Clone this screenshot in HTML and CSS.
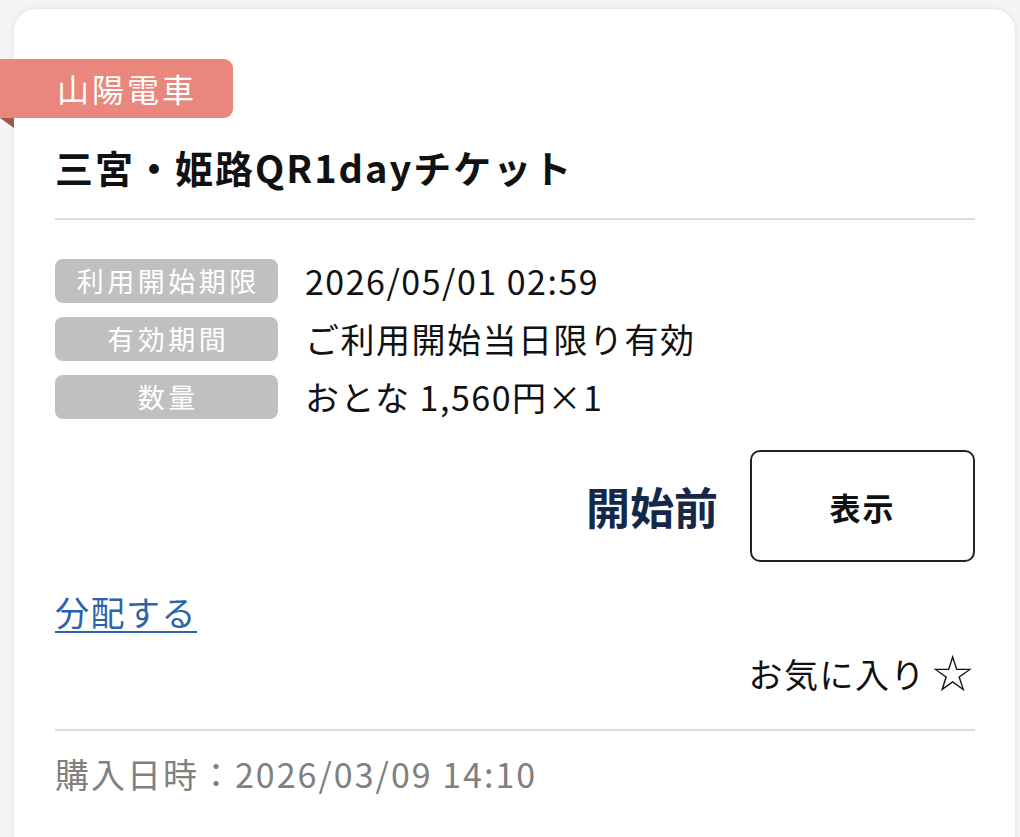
FILE: index.html
```html
<!DOCTYPE html>
<html lang="ja">
<head>
<meta charset="utf-8">
<link rel="stylesheet" href="styles.css">
</head>
<body>
<div class="card">
  <div class="ribbon">山陽電車</div>
  <h1 class="title">三宮・姫路QR1dayチケット</h1>
  <hr class="divider">
  <div class="info">
    <div class="label">利用開始期限</div>
    <div class="value">2026/05/01 02:59</div>
    <div class="label">有効期間</div>
    <div class="value">ご利用開始当日限り有効</div>
    <div class="label">数量</div>
    <div class="value">おとな 1,560円×1</div>
  </div>
  <div class="status-row">
    <span class="status">開始前</span>
    <button class="show-btn">表示</button>
  </div>
  <a class="share" href="#">分配する</a>
  <div class="fav">お気に入り <span class="star">☆</span></div>
  <hr class="divider divider-bottom">
  <div class="purchased">購入日時：2026/03/09 14:10</div>
</div>
</body>
</html>
```
FILE: styles.css
```css
html, body {
  margin: 0;
  padding: 0;
  background: #f5f5f5;
  font-family: "Noto Sans CJK JP", "Noto Sans", sans-serif;
  color: #111;
}
body {
  padding: 9px 5px 0 14px;
  height: 837px;
  box-sizing: border-box;
  overflow: hidden;
}
.card {
  background: #fff;
  border-radius: 22px;
  box-shadow: 0 0 6px rgba(0,0,0,0.10);
  padding: 50px 40px 60px 41px;
  min-height: 900px;
  box-sizing: border-box;
}
.ribbon {
  position: relative;
  margin-left: -55px;
  width: 233px;
  height: 59px;
  box-sizing: border-box;
  padding-left: 57px;
  background: #ea877c;
  color: #fff;
  font-size: 32px;
  letter-spacing: 3px;
  line-height: 59px;
  border-radius: 0 9px 9px 0;
}
.ribbon::after {
  content: "";
  position: absolute;
  left: 0;
  top: 59px;
  border-top: 10px solid #a3544b;
  border-left: 14px solid transparent;
}
.title {
  margin: 24px 0 0;
  font-size: 38px;
  font-weight: 700;
  letter-spacing: 2px;
  line-height: 50px;
}
.divider {
  border: 0;
  border-top: 2px solid #dcdcdc;
  margin: 26px 0 0;
}
.info {
  display: grid;
  grid-template-columns: 223px 1fr;
  column-gap: 27px;
  row-gap: 14px;
  margin-top: 39px;
}
.label {
  background: #c0c0c0;
  color: #fff;
  border-radius: 8px;
  height: 44px;
  line-height: 44px;
  text-align: center;
  font-size: 27px;
  letter-spacing: 3.5px;
  text-indent: 3.5px;
}
.value {
  font-size: 34px;
  line-height: 44px;
  letter-spacing: 1.5px;
}
.status-row {
  display: flex;
  justify-content: flex-end;
  align-items: center;
  gap: 32px;
  margin-top: 31px;
}
.status {
  font-size: 44px;
  font-weight: 700;
  color: #15284a;
}
.show-btn {
  width: 225px;
  height: 112px;
  background: #fff;
  border: 2px solid #222;
  border-radius: 10px;
  font-family: inherit;
  font-size: 31px;
  font-weight: 700;
  color: #111;
  letter-spacing: 2px;
}
.share {
  display: inline-block;
  margin-top: 28px;
  font-size: 34px;
  line-height: 44px;
  color: #2b62aa;
  text-decoration: underline;
  text-decoration-thickness: 2px;
  text-underline-offset: 5px;
  letter-spacing: 1.5px;
}
.fav {
  text-align: right;
  font-size: 34px;
  line-height: 44px;
  margin-top: 18px;
  letter-spacing: 1.5px;
}
.star {
  font-family: "DejaVu Sans", sans-serif;
  font-size: 50px;
  line-height: 44px;
  letter-spacing: 0;
  vertical-align: top;
  margin-left: -5px;
}
.divider-bottom {
  margin-top: 33px;
}
.purchased {
  margin-top: 21px;
  font-size: 34px;
  line-height: 44px;
  color: #808080;
  letter-spacing: 2px;
}
```
